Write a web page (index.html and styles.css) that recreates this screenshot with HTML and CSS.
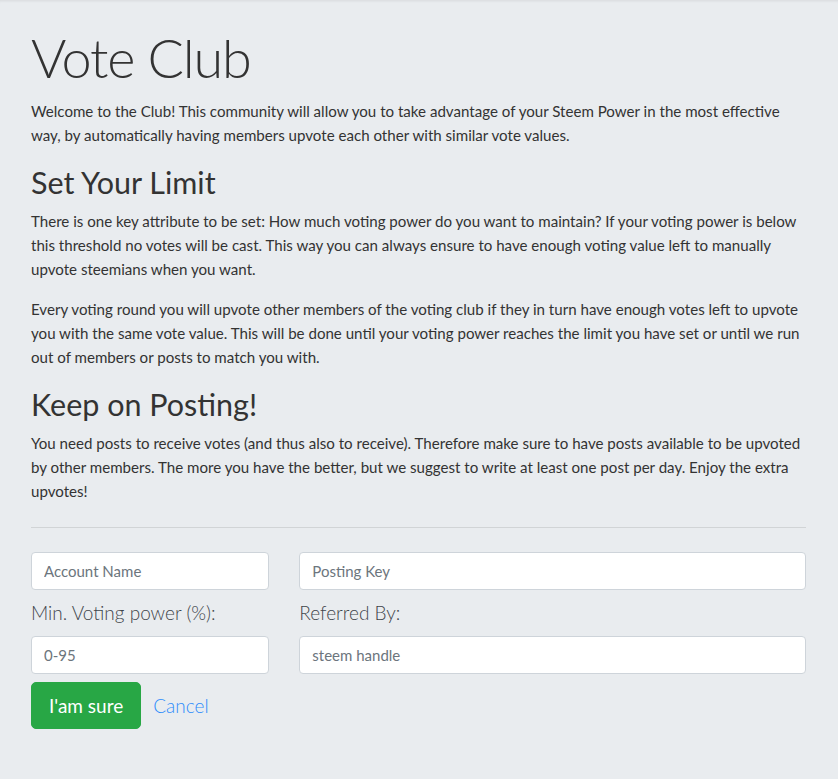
FILE: index.html
```html
<!DOCTYPE html>
<html lang="en">
<head>
<meta charset="utf-8">
<title>Vote Club</title>
<link rel="stylesheet" href="styles.css">
</head>
<body>
<main class="jumbotron">
  <h1 class="title">Vote Club</h1>
  <p class="lead-text">Welcome to the Club! This community will allow you to take advantage of your Steem Power in the most effective way, by automatically having members upvote each other with similar vote values.</p>
  <h2 class="section-title">Set Your Limit</h2>
  <p class="lead-text">There is one key attribute to be set: How much voting power do you want to maintain? If your voting power is below this threshold no votes will be cast. This way you can always ensure to have enough voting value left to manually upvote steemians when you want.</p>
  <p class="lead-text">Every voting round you will upvote other members of the voting club if they in turn have enough votes left to upvote you with the same vote value. This will be done until your voting power reaches the limit you have set or until we run out of members or posts to match you with.</p>
  <h2 class="section-title">Keep on Posting!</h2>
  <p class="lead-text">You need posts to receive votes (and thus also to receive). Therefore make sure to have posts available to be upvoted by other members. The more you have the better, but we suggest to write at least one post per day. Enjoy the extra upvotes!</p>
  <hr class="divider">
  <form class="signup">
    <input class="field" type="text" placeholder="Account Name">
    <input class="field" type="password" placeholder="Posting Key">
    <label class="field-label" for="vp">Min. Voting power (%):</label>
    <label class="field-label" for="ref">Referred By:</label>
    <input class="field" id="vp" type="text" placeholder="0-95">
    <input class="field" id="ref" type="text" placeholder="steem handle">
    <div class="actions">
      <button class="btn-sure" type="button">I'am sure</button>
      <a class="cancel" href="#">Cancel</a>
    </div>
  </form>
</main>
</body>
</html>
```
FILE: styles.css
```css
html, body {
  margin: 0;
  padding: 0;
  background: #e9ecef;
}
body {
  font-family: "Source Sans Pro", Lato, "Open Sans", sans-serif;
  color: #343a40;
  min-height: 779px;
  box-shadow: inset 0 3px 3px -2px rgba(0,0,0,0.08);
}
.jumbotron {
  padding: 24px 32px 40px 31px;
}
.title {
  font-size: 54px;
  font-weight: 300;
  line-height: 67px;
  letter-spacing: -1.2px;
  margin: 0 0 8px;
  color: #333;
}
.lead-text {
  font-size: 15.1px;
  line-height: 24px;
  margin: 0 0 16px;
  color: #333;
}
.section-title {
  font-size: 30.5px;
  font-weight: 400;
  line-height: 38px;
  margin: 0 0 8px;
  color: #333;
}
.divider {
  border: 0;
  border-top: 1px solid rgba(0,0,0,0.1);
  margin: 24px 0 24px;
}
.signup {
  display: grid;
  grid-template-columns: calc((100% + 30px) / 3 - 30px) 1fr;
  column-gap: 30px;
}
.field {
  box-sizing: border-box;
  height: 38px;
  padding: 6px 12px;
  border: 1px solid #ced4da;
  border-radius: 4px;
  background: #fff;
  font-family: inherit;
  font-size: 15px;
  color: #495057;
}
.field::placeholder {
  color: #6c757d;
}
.field-label {
  font-size: 19px;
  font-weight: 300;
  line-height: 30px;
  color: #3f454b;
  margin: 8px 0 8px;
}
.actions {
  grid-column: 1 / -1;
  display: flex;
  align-items: center;
  gap: 12px;
  margin-top: 8px;
}
.btn-sure {
  box-sizing: border-box;
  height: 47px;
  padding: 8px 17px;
  border: 1px solid #28a745;
  border-radius: 5px;
  background: #28a745;
  color: #fff;
  font-family: inherit;
  font-size: 19px;
  line-height: 29px;
}
.cancel {
  font-size: 19px;
  color: #2f8cfb;
  text-decoration: none;
  font-weight: 300;
}
```
